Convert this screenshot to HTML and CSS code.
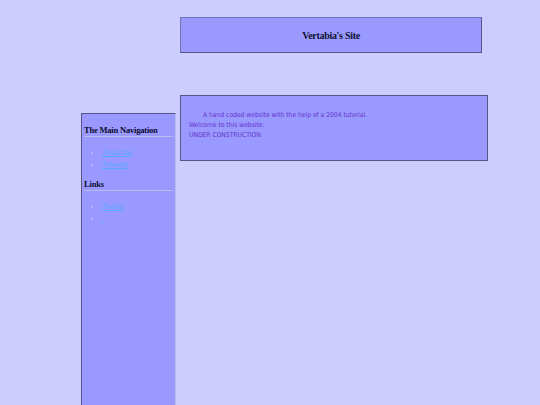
FILE: index.html
```html
<!DOCTYPE html>
<html>
<head>
<meta charset="utf-8">
<title>Vertabia's Site</title>
<link rel="stylesheet" href="styles.css">
</head>
<body>
<div class="header"><h1 class="title">Vertabia's Site</h1></div>
<div class="main">
  <div class="sidebar">
    <h2 class="side-heading">The Main Navigation</h2>
    <ul class="side-list">
      <li><a href="#">About me</a></li>
      <li><a href="#">Artwork</a></li>
    </ul>
    <h2 class="side-heading">Links</h2>
    <ul class="side-list">
      <li><a href="#">Twitter</a></li>
      <li><a href="#">&nbsp;</a></li>
    </ul>
  </div>
  <div class="content">
    <p class="intro">A hand coded website with the help of a 2004 tutorial.</p>
    <p class="line">Welcome to this website.</p>
    <p class="line">UNDER CONSTRUCTION</p>
  </div>
</div>
</body>
</html>
```
FILE: styles.css
```css
html, body {
  margin: 0;
  padding: 0;
  background: #ccccff;
}
body {
  font-family: "DejaVu Sans Condensed", "DejaVu Sans", sans-serif;
  overflow: hidden;
  height: 405px;
}
.header {
  margin: 17px 0 0 180px;
  width: 300px;
  height: 34px;
  background: #9999ff;
  border: 1px solid;
  border-color: #7272b8 #555588 #555588 #7272b8;
  display: flex;
  align-items: center;
  justify-content: center;
}
.title {
  margin: 0;
  font-family: "Liberation Serif", serif;
  font-weight: bold;
  font-size: 10px;
  letter-spacing: -0.3px;
  color: #111133;
}
.main {
  display: flex;
  align-items: flex-start;
  gap: 4px;
  margin: 42px 0 0 81px;
}
.sidebar {
  margin-top: 18px;
  width: 93px;
  min-height: 300px;
  padding-top: 3px;
  background: #9999ff;
  border: 1px solid;
  border-color: #555588 #bbbbee #bbbbee #555588;
}
.side-heading {
  margin: 7px 2px 0 2px;
  padding: 0;
  border-bottom: 1px solid #bbbbee;
  font-family: "Liberation Serif", serif;
  font-weight: bold;
  font-size: 8.5px;
  letter-spacing: -0.2px;
  color: #0d0d2e;
  line-height: 12px;
}
.side-list {
  margin: 10px 0 0 0;
  padding-left: 20px;
  font-family: "Liberation Serif", serif;
  font-size: 7.5px;
  line-height: 12px;
  color: #bbbbff;
}
.side-list a {
  color: #55aaff;
}
.content {
  width: 298px;
  height: 50px;
  background: #9999ff;
  border: 1px solid #555588;
  padding: 14px 0 0 8px;
  font-size: 6.7px;
  line-height: 10px;
  color: #6633cc;
}
.content p {
  margin: 0;
}
.intro {
  text-indent: 14px;
}
```
